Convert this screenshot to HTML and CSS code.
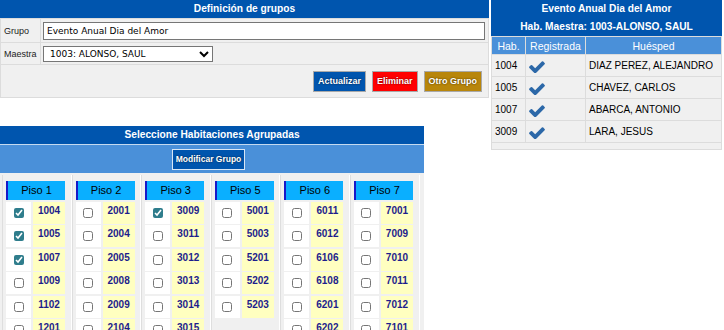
FILE: index.html
```html
<!DOCTYPE html>
<html lang="es">
<head>
<meta charset="UTF-8">
<meta name="viewport" content="width=device-width, initial-scale=1.0">
<title>Definición de grupos</title>
<link rel="stylesheet" href="styles.css">
</head>
<body>

<div class="pagina">
    <div class="izq">
        <!-- Definicion del grupo -->
        <div class="panel">
            <div class="barra">Definición de grupos</div>
            <table class="form">
                <tr class="fila-grupo">
                    <td class="lbl">Grupo</td>
                    <td class="campo"><input type="text" class="txt" value="Evento Anual Dia del Amor"></td>
                </tr>
                <tr class="fila-maestra">
                    <td class="lbl">Maestra</td>
                    <td class="campo">
                        <select class="sel">
                            <option>1003: ALONSO, SAUL</option>
                        </select>
                    </td>
                </tr>
                <tr class="fila-botones">
                    <td colspan="2">
                        <div class="acciones">
                            <button class="btn azul">Actualizar</button>
                            <button class="btn rojo">Eliminar</button>
                            <button class="btn ocre">Otro Grupo</button>
                        </div>
                    </td>
                </tr>
            </table>
        </div>

        <!-- Habitaciones por piso -->
        <div class="panel habs">
            <div class="barra">Seleccione Habitaciones Agrupadas</div>
            <div class="subbarra">
                <button class="btn azul claro">Modificar Grupo</button>
            </div>
            <div class="pisos" id="pisos"></div>
        </div>
    </div>

    <!-- Resumen del grupo -->
    <div class="resumen">
        <div class="barra doble">Evento Anual Dia del Amor<br>Hab. Maestra: 1003-ALONSO, SAUL</div>
        <table class="lista">
            <thead>
                <tr><th class="c-hab">Hab.</th><th class="c-reg">Registrada</th><th>Huésped</th></tr>
            </thead>
            <tbody id="huespedes"></tbody>
            <tfoot>
                <tr><td colspan="3"></td></tr>
            </tfoot>
        </table>
    </div>
</div>

<script>
    var pisos = [
        { nombre: 'Piso 1', habs: ['1004', '1005', '1007', '1009', '1102', '1201'] },
        { nombre: 'Piso 2', habs: ['2001', '2004', '2005', '2008', '2009', '2104'] },
        { nombre: 'Piso 3', habs: ['3009', '3011', '3012', '3013', '3014', '3015'] },
        { nombre: 'Piso 5', habs: ['5001', '5003', '5201', '5202', '5203'] },
        { nombre: 'Piso 6', habs: ['6011', '6012', '6106', '6108', '6201', '6202'] },
        { nombre: 'Piso 7', habs: ['7001', '7009', '7010', '7011', '7012', '7101'] }
    ];
    var marcadas = ['1004', '1005', '1007', '3009'];

    var huespedes = [
        { hab: '1004', nombre: 'DIAZ PEREZ, ALEJANDRO' },
        { hab: '1005', nombre: 'CHAVEZ, CARLOS' },
        { hab: '1007', nombre: 'ABARCA, ANTONIO' },
        { hab: '3009', nombre: 'LARA, JESUS' }
    ];

    var check = '<svg class="palomita" viewBox="110 360 1570 1080"><path d="M1671 566q0 40-28 68l-724 724-136 136q-28 28-68 28t-68-28l-136-136-362-362q-28-28-28-68t28-68l136-136q28-28 68-28t68 28l294 295 656-657q28-28 68-28t68 28l136 136q28 28 28 68z"/></svg>';

    var contPisos = document.getElementById('pisos');
    pisos.forEach(function(piso) {
        var col = document.createElement('div');
        col.className = 'piso';
        var html = '<div class="piso-tit">' + piso.nombre + '</div>';
        piso.habs.forEach(function(hab) {
            var sel = marcadas.indexOf(hab) >= 0 ? ' checked' : '';
            html += '<div class="chk"><input type="checkbox"' + sel + '></div>';
            html += '<div class="num">' + hab + '</div>';
        });
        col.innerHTML = html;
        contPisos.appendChild(col);
    });

    var tbody = document.getElementById('huespedes');
    huespedes.forEach(function(h) {
        var tr = document.createElement('tr');
        tr.innerHTML = '<td class="c-hab">' + h.hab + '</td><td class="c-reg">' + check + '</td><td>' + h.nombre + '</td>';
        tbody.appendChild(tr);
    });
</script>

</body>
</html>
```

FILE: styles.css
```css
body {
    margin: 0;
    font-family: "Liberation Sans", Arial, sans-serif;
    background-color: #ffffff;
    color: #000000;
}
.pagina {
    display: flex;
    align-items: flex-start;
}
.izq {
    width: 489px;
}
.barra {
    background-color: #0055ae;
    color: #ffffff;
    font-weight: bold;
    font-size: 10.2px;
    line-height: 18px;
    text-align: center;
}

/* formulario */
.form {
    width: 100%;
    border-collapse: collapse;
    background-color: #f0f0f0;
}
.form td {
    border: 1px solid #dcdcdc;
    padding: 0;
}
.fila-grupo td {
    height: 23px;
}
.fila-maestra td {
    height: 21px;
}
.fila-botones td {
    height: 32px;
}
.lbl {
    width: 36px;
    padding-left: 3px !important;
    font-size: 9px;
    color: #222;
}
.campo {
    padding-left: 2px !important;
}
.txt {
    box-sizing: border-box;
    width: 442px;
    height: 18px;
    margin: 0;
    padding: 0 3px;
    border: 1px solid #767676;
    font-family: "DejaVu Sans", Verdana, sans-serif;
    font-size: 9px;
    display: block;
}
.sel {
    box-sizing: border-box;
    width: 170px;
    height: 16px;
    margin: 0;
    padding: 0 2px;
    border: 1px solid #767676;
    border-radius: 0;
    background-color: #ffffff;
    font-family: "DejaVu Sans", Verdana, sans-serif;
    font-size: 9px;
    display: block;
}
.acciones {
    display: flex;
    justify-content: flex-end;
    gap: 6px;
    padding-right: 6px;
}
.btn {
    height: 21px;
    padding: 0 4px;
    border: 1px solid #a9a9a9;
    color: #ffffff;
    font-family: "Liberation Sans", Arial, sans-serif;
    font-weight: bold;
    font-size: 9px;
    text-shadow: 0 0 2px rgba(0, 0, 0, 0.7);
    cursor: pointer;
}
.azul {
    background-color: #0055ae;
}
.rojo {
    background-color: #ff0000;
}
.ocre {
    background-color: #b8860b;
}
.claro {
    border-color: #d8e6f5;
    font-size: 8.5px;
    padding: 0 3px;
    margin-left: -7px;
}

/* habitaciones */
.habs {
    width: 424px;
    margin-top: 28px;
}
.subbarra {
    background-color: #4a90d9;
    border-top: 1px solid #c4daf0;
    height: 28px;
    display: flex;
    align-items: center;
    justify-content: center;
}
.pisos {
    display: flex;
    background-color: #f0f0f0;
    padding: 2px 4px 0 2px;
    height: 200px;
}
.piso {
    box-sizing: border-box;
    width: 69.6px;
    border-left: 1px solid #dedede;
    border-right: 1px solid #ffffff;
    padding: 6px 0 0 3px;
    display: grid;
    grid-template-columns: 25px 32px;
    grid-template-rows: 19px;
    grid-auto-rows: 22px;
    gap: 1.5px 2px;
    align-content: start;
}
.piso-tit {
    grid-column: span 2;
    background-color: #0aafff;
    border-left: 2px solid #1818c8;
    font-size: 11px;
    line-height: 19px;
    text-align: center;
    color: #000;
}
.chk {
    background-color: #ffffff;
    display: flex;
    align-items: center;
    justify-content: center;
}
.chk input {
    width: 10px;
    height: 10px;
    margin: 0;
    accent-color: #2f7d8c;
}
.num {
    background-color: #ffffc0;
    color: #1d1d8c;
    font-weight: bold;
    font-size: 10px;
    text-align: center;
    padding-top: 3px;
    box-sizing: border-box;
}

/* resumen */
.resumen {
    width: 231px;
    margin-left: 2px;
}
.doble {
    line-height: 18px;
}
.lista {
    width: 100%;
    border-collapse: collapse;
    font-size: 10px;
}
.lista th {
    background-color: #4a90d9;
    color: #ffffff;
    font-weight: normal;
    font-size: 10.5px;
    height: 17px;
    border: 1px solid #dcdcdc;
    padding: 0;
}
.lista td {
    background-color: #f0f0f0;
    border: 1px solid #dcdcdc;
    height: 21px;
    padding: 0 0 0 3px;
}
.lista tfoot td {
    height: 6px;
}
.c-hab {
    width: 30px;
}
.c-reg {
    width: 56px;
}
.palomita {
    width: 16px;
    height: 12px;
    fill: #2c68a8;
    display: block;
    margin-top: 3px;
}
```
